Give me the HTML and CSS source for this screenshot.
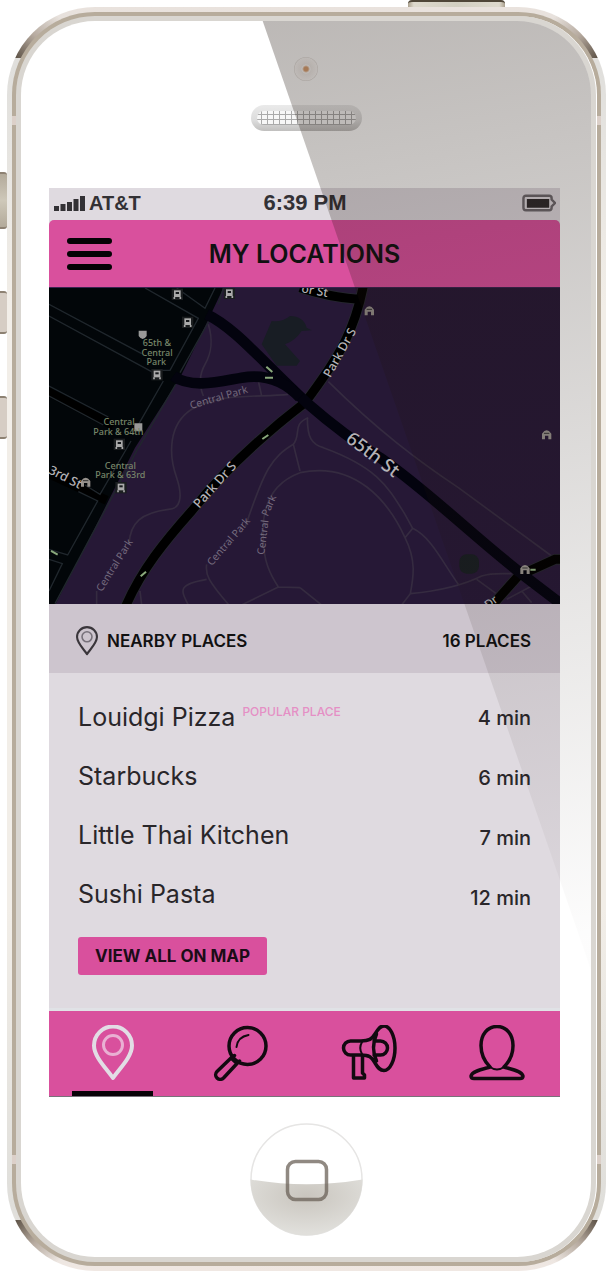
FILE: index.html
```html
<!DOCTYPE html>
<html lang="en">
<head>
<meta charset="utf-8">
<meta name="viewport" content="width=device-width, initial-scale=1">
<title>My Locations</title>
<link rel="stylesheet" href="styles.css">
</head>
<body>
<div class="device">
  <div class="device-top"><span class="power"></span></div>
  <div class="device-side">
    <span class="switch"></span>
    <span class="volume"></span>
    <span class="volume"></span>
  </div>
  <div class="shell"><div class="band"><div class="rim"><div class="face">
    <div class="forehead">
      <span class="camera"></span>
      <span class="speaker"><span class="grill"></span></span>
    </div>
    <main class="screen">
      <div class="status">
        <span class="carrier">
          <svg class="signal" viewBox="0 0 31 17" aria-hidden="true"><path d="M0 11h5v5H0zM6.500 9h5v7h-5zM13 7h5v9h-5zM19.500 4h5v12h-5zM26 1h5v15h-5z"/></svg>
          AT&amp;T
        </span>
        <span class="clock">6:39 PM</span>
        <svg class="battery" viewBox="0 0 35 18" aria-hidden="true"><path class="battery-case" d="M4 1.500h24a2.500 2.500 0 0 1 2.500 2.500v1.500l3.500 3.500-3.500 3.500v1.500a2.500 2.500 0 0 1-2.500 2.500H4A2.500 2.500 0 0 1 1.500 14V4A2.500 2.500 0 0 1 4 1.500z"/><path d="M5 5h23v9H5z"/></svg>
      </div>
      <header class="bar">
        <button class="menu" aria-label="Menu"><span></span><span></span><span></span></button>
        <h1>MY LOCATIONS</h1>
      </header>
      <svg class="map" viewBox="12 21 1533 947" role="img" aria-label="Map of Central Park">
        <defs>
          <g id="stop"><rect x="-17" y="-17" width="34" height="34" fill="#1b1e20"/><path d="M-10-12h20v20h-20z" fill="#aaa"/><path d="M-5-7h10v6h-10z" fill="#17191c"/><path d="M-9 8v6m18-6v6" stroke="#aaa" stroke-width="5"/></g>
          <g id="place"><path d="M-14 13V-4Q0-24 14-4v17H5V2h-10v11z" fill="#96918c"/><path d="M-8-5h16" stroke="#333" stroke-width="3"/></g>
          <g id="pin-icon"><path class="pin-body" d="M28 53C22 44 9 32 9 20.500a19 19 0 0 1 38 0C47 32 34 44 28 53z"/><circle class="pin-dot" cx="28" cy="20" r="9.500"/></g>
        </defs>
        <rect x="12" y="21" width="1533" height="951" fill="#261836"/>
        <path d="M12 21H535L492 112 405 290 270 500 150 740 30 972H12z" fill="#020609"/>
        <path d="M5 330 205 434M5 575 185 658" class="road"/>
        <g class="kerb">
          <path d="M12 70 290 218M12 105 325 275M300 21 460 112 375 268H350M395 21 480 82 510 21M12 315 190 408M12 345 175 432M355 300 275 440M258 480 165 640 120 612M12 805 68 822 158 660 100 632M12 835 52 848 12 930"/>
          <path d="M535 21 520 70M405 275 492 120M392 310 275 510 30 968"/>
        </g>
        <g class="trail">
          <path d="M490 130C505 180 500 215 480 250S465 320 475 345"/>
          <path d="M730 340C640 350 520 335 440 385 370 430 370 520 395 590 415 650 405 685 370 685 290 695 255 725 252 790M155 930V972"/>
          <path d="M640 300 650 345M790 410C740 430 770 460 745 490 680 530 660 560 600 740M745 490 765 570M485 850C480 880 490 900 550 970M485 895C400 910 405 925 430 972M285 930 290 972"/>
          <path d="M765 575C670 610 650 690 655 770 655 840 675 880 700 918L765 920M700 918 590 972"/>
          <path d="M787 410C787 470 800 490 835 500 1000 560 1030 620 1080 700L1103 742 1080 770M765 575C930 540 1030 660 1080 770 1115 840 1105 890 1096 938L1070 972M1103 742C1160 770 1190 840 1240 910M1096 938C1180 930 1260 910 1310 885 1340 875 1370 878 1400 878M1295 895 1370 950M765 920 830 972M850 302C1000 450 1120 540 1240 620L1520 825"/>
          <path d="M1385 955 1470 910M1430 930 1460 965"/>
        </g>
        <path d="M680 120Q710 125 735 105 775 105 785 140L800 148 770 150Q750 180 720 190L765 240 755 254H695L650 190z" fill="#181d24"/>
        <rect x="1243" y="820" width="59" height="58" rx="22" fill="#181e22"/>
        <path class="road-edge" d="M955 15C930 140 890 220 780 365 650 465 540 565 440 690 360 780 290 865 240 980M765 20Q850 48 940 55M1335 980 1420 885 1530 835H1550"/>
        <path class="road" d="M955 15C930 140 890 220 780 365 650 465 540 565 440 690 360 780 290 865 240 980M765 20Q850 48 940 55M1335 980 1420 885 1530 835H1550"/>
        <g class="road avenue">
          <path d="M485 100C570 140 650 240 785 365Q900 465 1005 530C1150 630 1300 780 1445 890L1560 978"/>
          <path d="M385 285C440 325 530 300 590 290S710 290 765 350"/>
        </g>
        <use href="#stop" x="397" y="40"/><use href="#stop" x="553" y="37"/><use href="#stop" x="428" y="124"/><use href="#stop" x="336" y="281"/><use href="#stop" x="223" y="490"/><use href="#stop" x="228" y="620"/>
        <path d="M281 149h24v16q-12 18-24 0zM268 427h24v24h-24z" fill="#999"/>
        <use href="#place" x="122" y="604"/><use href="#place" x="973" y="90"/><use href="#place" x="1505" y="462"/><use href="#place" x="1440" y="866"/>
        <path class="arrow" d="M664 257l18 16M660 290h24M652 474l18-12M287 886l16-14M18 810l20 11M1456 866h16"/>
        <g class="stop-name">
          <text x="336" y="195">65th &amp;</text><text x="336" y="224">Central</text><text x="334" y="252">Park</text>
          <text x="222" y="433">Central</text><text x="220" y="462">Park &amp; 64th</text>
          <text x="226" y="563">Central</text><text x="226" y="592">Park &amp; 63rd</text>
        </g>
        <g class="street">
          <text transform="translate(8 576) rotate(27)" font-size="38">3rd St</text>
          <text transform="translate(462 684) rotate(-48)" font-size="39">Park Dr S</text>
          <text transform="translate(856 292) rotate(-61)" font-size="37">Park Dr S</text>
          <text transform="translate(768 34) rotate(10)" font-size="36">or St</text>
          <text transform="translate(899 480) rotate(37)" font-size="55">65th St</text>
          <text transform="translate(1330 984) rotate(-38)" font-size="34">Dr</text>
        </g>
        <g class="path-name">
          <text transform="translate(438 384) rotate(-16)">Central Park</text>
          <text transform="translate(170 934) rotate(-58)">Central Park</text>
          <text transform="translate(500 856) rotate(-49)">Central Park</text>
          <text transform="translate(658 822) rotate(-83)">Central</text>
          <text transform="translate(668 708) rotate(-66)">Park</text>
        </g>
      </svg>
      <section class="places">
        <div class="places-head">
          <h2><svg class="pin-small" viewBox="7 0 42 56" aria-hidden="true"><use href="#pin-icon"/></svg>NEARBY PLACES</h2>
          <span>16 PLACES</span>
        </div>
        <div class="places-body">
          <ul class="names">
            <li>Louidgi Pizza <span class="tag">POPULAR PLACE</span></li>
            <li>Starbucks</li>
            <li>Little Thai Kitchen</li>
            <li>Sushi Pasta</li>
          </ul>
          <ul class="times" aria-label="Travel times">
            <li>4 min</li>
            <li>6 min</li>
            <li>7 min</li>
            <li>12 min</li>
          </ul>
          <button class="view-all">VIEW ALL ON MAP</button>
        </div>
      </section>
      <nav class="tabs">
        <a class="tab active" href="#locations" aria-label="Locations"><svg viewBox="0 0 56 56"><use href="#pin-icon"/></svg></a>
        <a class="tab" href="#search" aria-label="Search"><svg viewBox="0 0 56 56"><circle cx="34.500" cy="21" r="18.500"/><path d="M18 33 4 46.500a4.500 4.500 0 0 0 6.500 6.500L24 38.500M18 33l6 5.500M18 33l3.500-2.500M24 38.500l2.500-2.500"/><path class="fine" d="M23.500 22q1-10 12-12"/></svg></a>
        <a class="tab" href="#news" aria-label="News"><svg viewBox="0 0 56 56"><path d="M20 16H9.500a7 7 0 0 0 0 14H20C28 30 31 32 34 38 37 43 39 45.500 43 45.500 49 45.500 54 35 54 23S49 1 43 1C39 1 37 4 34 9 31 14 28 16 20 16z"/><path d="M33 16h6.500a7 7 0 0 1 0 14H33M35.500 9Q29.500 22.500 35.500 36M12.500 31v22h11v-3l-2-2V31"/><path class="fine" d="M21 17q-3.500 6 0 12"/></svg></a>
        <a class="tab" href="#profile" aria-label="Profile"><svg viewBox="0 0 56 56"><path d="M28 1.500C18.500 1.500 12 9.500 12 20.500 12 30 16 37 21 42 14 44 3 46 2 51q0 2.500 3 2.500h46q3 0 3-2.500c-1-5-12-7-19-9 5-5 9-12 9-21.500C44 9.500 37.500 1.500 28 1.500z"/><path class="fine" d="M21 42q7 5 14 0"/></svg></a>
      </nav>
    </main>
    <button class="home" aria-label="Home">
      <svg viewBox="0 0 113 113">
        <defs><radialGradient id="shine" cx=".5" cy=".3" r=".65"><stop offset="0" stop-color="#c9c5be"/><stop offset="1" stop-color="#e0dfdb"/></radialGradient></defs>
        <circle cx="56.500" cy="56.500" r="55.500" fill="#fff" stroke="#e6e5e4" stroke-width="1.500"/>
        <path d="M.5 56.500Q56.500 66 112.500 56.500A56 56 0 0 1 .5 56.500z" fill="url(#shine)"/>
        <rect x="37.500" y="38.500" width="39" height="38" rx="8" fill="none" stroke="#6b6158" stroke-opacity=".75" stroke-width="3.500"/>
      </svg>
    </button>
    <div class="glare"></div>
  </div></div></div></div>
</div>
</body>
</html>
```
FILE: styles.css
```css
* { box-sizing: border-box; }

body {
  margin: 0;
  background: #fff;
  color: #111;
  font-family: Inter, "Liberation Sans", sans-serif;
}

h1, h2, ul { margin: 0; padding: 0; }
ul { list-style: none; }
button { border: 0; padding: 0; background: none; color: inherit; font: inherit; cursor: pointer; }

/* Hardware */
.device {
  display: grid;
  grid-template-columns: 7px minmax(0, 1fr);
  grid-template-rows: 7px auto;
}

.device-top {
  grid-column: 1 / 3;
  display: flex;
  justify-content: flex-end;
  padding-right: 101px;
}

.power {
  width: 97px;
  border-top: 2px solid #4f4638;
  border-radius: 4px 4px 0 0;
  background: linear-gradient(90deg, #aaa08d, #ded9cd 6%, #d2cfc1 50%, #ded9cd 94%, #aaa08d);
}

.device-side {
  display: flex;
  flex-direction: column;
  padding-top: 165px;
}

.switch, .volume {
  height: 43px;
  margin-bottom: 62px;
  border: solid #8d8172;
  border-width: 2px 0;
  border-radius: 0 3px 3px 0;
  background: #d6cdc4;
}

.switch { height: 57px; background: linear-gradient(#b3aa9a, #cec8b9, #b3aa9a); }

.shell {
  --corner: #5c5145, #b7aba0 30px, transparent 60px;
  padding: 5px;
  border-radius: 88px;
  background:
    radial-gradient(circle at 8px 51px, var(--corner)) 0 0 / 70px 51px no-repeat,
    radial-gradient(circle at 62px 51px, var(--corner)) 100% 0 / 70px 51px no-repeat,
    radial-gradient(circle at 8px 0, var(--corner)) 0 100% / 70px 51px no-repeat,
    radial-gradient(circle at 62px 0, var(--corner)) 100% 100% / 70px 51px no-repeat,
    linear-gradient(#e9e2dd, #e0dfdc 60px, #f2eee8 300px, #f2eee8 900px, #dfdeda 1200px, #f0e8e3);
}

.band {
  padding: 4px;
  border-radius: 83px;
  background:
    linear-gradient(#dcd0c9, #dcd0c9) 0 104px / 100% 9px no-repeat,
    linear-gradient(#dcd0c9, #dcd0c9) 0 calc(100% - 102px) / 100% 9px no-repeat,
    #b7ac9c;
}

.rim {
  padding: 5px;
  border-radius: 79px;
  border-right: 1px solid #fff;
  background: #d9d6d1;
}

.face {
  position: relative;
  display: flex;
  flex-direction: column;
  overflow: hidden;
  border-radius: 74px;
  background: #fff;
}

.forehead {
  display: flex;
  flex-direction: column;
  align-items: center;
  gap: 24px;
  padding: 36px 0 57px;
}

.camera {
  width: 24px;
  height: 24px;
  border-radius: 50%;
  background: radial-gradient(circle, #dba274 0 2px, #fff 4px, #f2efed 5px, #fcfaf9 11px, #dcd8d5 12px);
}

.speaker {
  width: 111px;
  padding: 6px;
  border-radius: 13px;
  background: linear-gradient(#eaeaea, #dcdcdc 60%, #c0bfbe);
}

.grill {
  display: block;
  height: 14px;
  border-radius: 7px;
  background:
    repeating-linear-gradient(90deg, transparent 0 4px, #aaa 4px 5px, transparent 5px 6px),
    repeating-linear-gradient(transparent 0 3px, #aaa 3px 4px, transparent 4px 5px),
    #f7f7f7;
}

.home {
  align-self: center;
  width: 113px;
  margin: 26px 0 21px;
}

.home svg { display: block; }

.glare {
  position: absolute;
  inset: 0;
  pointer-events: none;
  clip-path: polygon(42.4% 0, 100% 0, 100% 76.8%);
  background: linear-gradient(170deg, rgb(30 18 10 / 31%) 0, rgb(30 18 10 / 23%) 20%, rgb(30 18 10 / 11%) 49%, rgb(30 18 10 / 1%) 76%);
}

/* Screen */
.screen {
  margin: 0 31px 0 28px;
  background: #dfdae0;
}

.status {
  display: grid;
  grid-template-columns: 1fr auto 1fr;
  align-items: center;
  height: 32px;
  padding: 0 4px 2px 5px;
  color: #333135;
  font: bold 22px/28px "Liberation Sans", Arial, sans-serif;
}

.carrier { display: flex; align-items: center; gap: 4px; font-size: 20px; }
.signal { width: 31px; height: 17px; fill: #333135; }
.battery { width: 34px; height: 18px; justify-self: end; fill: #2d292c; }
.battery-case { fill: none; stroke: #6d686e; stroke-width: 2.5; }

.bar {
  display: grid;
  grid-template-columns: 45px 1fr 45px;
  align-items: center;
  height: 67px;
  padding: 0 18px;
  border-radius: 5px 5px 0 0;
  background: #d9509d;
}

.menu { display: grid; gap: 7px; }
.menu span { height: 6px; border-radius: 3px; background: #050305; }

.bar h1 {
  font-size: 25px;
  font-weight: 600;
  line-height: 32px;
  text-align: center;
}

/* Map */
.map {
  display: block;
  width: 100%;
  border-top: 1px solid #3b2350;
  font-family: "Noto Sans", sans-serif;
}

.kerb { fill: none; stroke: #20272d; stroke-width: 4; }
.trail { fill: none; stroke: #352b40; stroke-width: 5; }
.road { fill: none; stroke: #000; stroke-width: 27; }
.road-edge { fill: none; stroke: #26282f; stroke-width: 32; }
.avenue { stroke: #03030e; stroke-width: 32; }
.arrow { stroke: #8aa97c; stroke-width: 6; }
.stop-name { fill: #78866a; font-size: 27px; font-weight: 500; text-anchor: middle; }
.street { fill: #b4b2b6; font-weight: 500; }
.path-name { fill: #756b7e; font-size: 31px; }

/* Pins */
.pin-body { fill: none; stroke: var(--pin, #3a363b); stroke-width: 4; stroke-linejoin: round; }
.pin-dot { fill: none; stroke: var(--pin-dot, #77717a); stroke-width: 3; }

/* Places */
.places-head {
  display: flex;
  align-items: center;
  justify-content: space-between;
  height: 69px;
  padding: 6px 29px 0 27px;
  background: #cdc5ce;
  font-size: 17px;
  font-weight: 600;
}

.places-head h2 {
  display: flex;
  align-items: center;
  gap: 9px;
  font: inherit;
}

.pin-small { width: 22px; height: 30px; }

.places-body {
  display: grid;
  grid-template-columns: 1fr auto;
  padding: 15px 29px 33px;
  border-bottom: 3px solid #e0e2e6;
  color: #29262a;
}

.names { font-size: 25px; line-height: 59px; }
.times { font-size: 20px; line-height: 60px; font-weight: 500; text-align: right; }

.tag {
  color: #e58fc5;
  font-size: 12px;
  font-weight: 500;
  line-height: 12px;
  vertical-align: 10px;
}

.view-all {
  justify-self: start;
  margin-top: 9px;
  padding: 0 17px;
  border-radius: 3px;
  background: #d9509d;
  color: #1c0c17;
  font-size: 17px;
  font-weight: 700;
  line-height: 38px;
}

/* Tabs */
.tabs {
  display: flex;
  justify-content: space-between;
  padding: 0 22px 0 23px;
  border-bottom: 1px solid #77727a;
  background: #d9509d;
}

.tab {
  display: flex;
  justify-content: center;
  width: 81px;
  padding: 14px 0 10px;
  border-bottom: 5px solid transparent;
}

.tab.active {
  --pin: #e2dde5;
  --pin-dot: #e9b0d3;
  border-bottom-color: #080307;
}

.tab svg {
  width: 56px;
  height: 56px;
  fill: none;
  stroke: #120a10;
  stroke-width: 3.5;
  stroke-linejoin: round;
  stroke-linecap: round;
}

.tab .fine { stroke-width: 2; }
```
